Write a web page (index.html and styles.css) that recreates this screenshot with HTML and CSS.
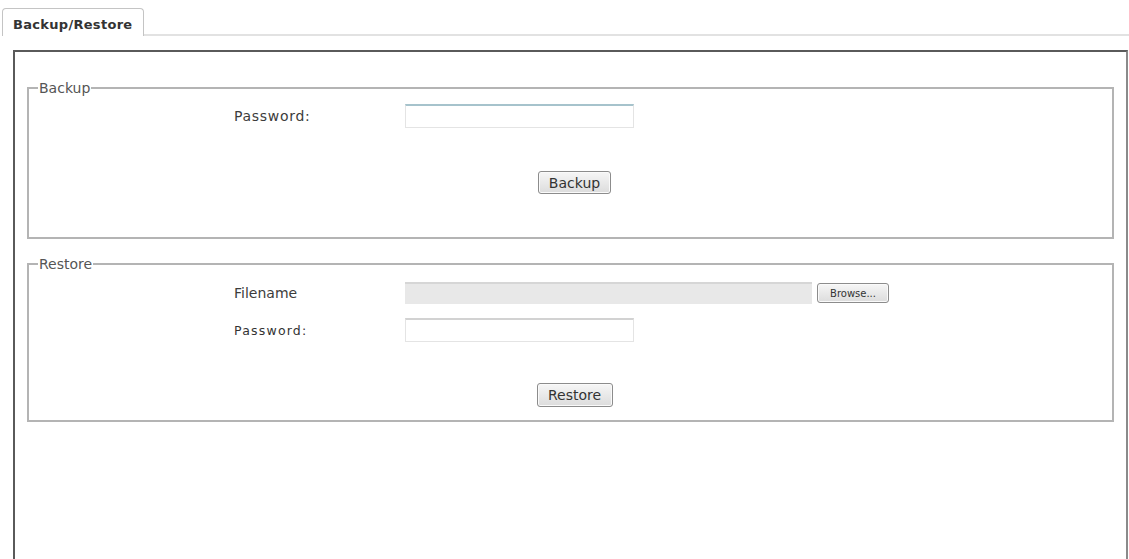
FILE: index.html
```html
<!DOCTYPE html>
<html lang="en">
<head>
    <meta charset="UTF-8">
    <title>Backup/Restore</title>
    <link rel="stylesheet" href="styles.css">
</head>
<body>
    <div class="tabs">
        <div class="tab">Backup/Restore</div>
        <div class="tab-line"></div>
    </div>
    <div class="panel">
        <fieldset class="group backup">
            <legend>Backup</legend>
            <div class="row">
                <label for="backupPassword" class="label-spaced">Password:</label>
                <input type="password" id="backupPassword" class="field field-active">
            </div>
            <div class="actions">
                <button class="btn">Backup</button>
            </div>
        </fieldset>
        <fieldset class="group restore">
            <legend>Restore</legend>
            <div class="row">
                <label>Filename</label>
                <div class="file-box"></div>
                <button class="btn btn-small">Browse...</button>
            </div>
            <div class="row">
                <label for="restorePassword" class="label-small">Password:</label>
                <input type="password" id="restorePassword" class="field">
            </div>
            <div class="actions">
                <button class="btn btn-wide">Restore</button>
            </div>
        </fieldset>
    </div>
</body>
</html>
```

FILE: styles.css
```css
body {
    margin: 0;
    font-family: "DejaVu Sans", Verdana, sans-serif;
    font-size: 14px;
    color: #444;
    background: #fff;
    overflow: hidden;
}
.tabs {
    display: flex;
    align-items: flex-end;
    padding: 8px 0 0 2px;
}
.tab {
    height: 28px;
    width: 142px;
    box-sizing: border-box;
    padding: 8px 0 0 10px;
    border: 1px solid #c4c4c4;
    border-bottom: none;
    border-radius: 4px 4px 0 0;
    font-size: 13px;
    font-weight: bold;
    color: #333;
    letter-spacing: 0.3px;
}
.tab-line {
    flex: 1;
    border-bottom: 2px solid #e2e2e2;
}
.panel {
    margin: 14px 1px 0 13px;
    height: 520px;
    border: 2px solid #5a5a5a;
    border-right-color: #8a8a8a;
    padding: 28px 12px 0 12px;
}
.group {
    margin: 0 0 17px 0;
    border: 2px solid #b4b4b4;
    padding: 8px 0 0 0;
    min-width: 0;
}
.group legend {
    margin-left: 9px;
    padding: 0 1px;
    line-height: 16px;
    font-size: 14px;
    color: #555;
}
.backup {
    padding-bottom: 43px;
}
.restore {
    padding-top: 10px;
    padding-bottom: 13px;
}
.row {
    display: flex;
    align-items: center;
    margin-bottom: 14px;
}
.row label {
    width: 171px;
    margin-left: 205px;
    font-size: 14px;
    color: #3c3c3c;
}
.label-spaced {
    letter-spacing: 0.7px;
}
.label-small {
    font-size: 12.5px !important;
    letter-spacing: 1.2px;
    color: #333 !important;
}
.field {
    width: 229px;
    height: 24px;
    box-sizing: border-box;
    border: 1px solid #e4e4e4;
    border-top: 2px solid #d2d2d2;
    background: #fff;
    margin: 0;
}
.field-active {
    border-top-color: #a6c3cc;
}
.backup .row {
    margin-bottom: 43px;
}
.file-box {
    width: 407px;
    height: 22px;
    box-sizing: border-box;
    border-top: 2px solid #d6d6d6;
    background: #e8e8e8;
    margin-right: 5px;
}
.actions {
    text-align: center;
    padding-left: 8px;
    margin-top: 41px;
}
.backup .actions {
    margin-top: 0;
}
.btn {
    font-family: "DejaVu Sans", Verdana, sans-serif;
    font-size: 14px;
    color: #333;
    height: 23px;
    width: 73px;
    padding: 0;
    border: 1px solid #8c8c8c;
    border-radius: 3px;
    background: linear-gradient(#f6f6f6, #dcdcdc);
    box-shadow: inset 0 0 0 1px #fafafa;
}
.btn-wide {
    width: 76px;
    height: 24px;
}
.btn-small {
    font-size: 10px;
    width: 72px;
    height: 20px;
}
```
